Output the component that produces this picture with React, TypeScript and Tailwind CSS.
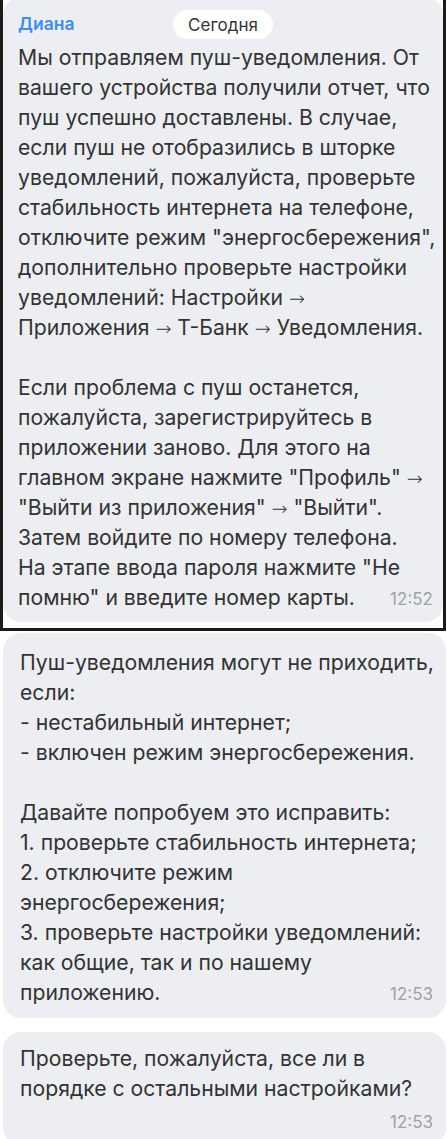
import React from "react";

const FONT = { fontFamily: "Inter, 'Noto Sans', 'Liberation Sans', sans-serif" };

function renderText(l: string) {
  const parts = l.split("→");
  return parts.map((p, i) => (
    <React.Fragment key={i}>
      {p}
      {i < parts.length - 1 && (
        <span style={{ fontFamily: "'DejaVu Sans', sans-serif" }} className="text-[19px] font-extralight">→</span>
      )}
    </React.Fragment>
  ));
}

function Lines({ lines }: { lines: string[] }) {
  return (
    <>
      {lines.map((l, i) => (
        <div key={i} className="whitespace-nowrap h-[30px]">
          {l === "" ? "\u00a0" : renderText(l)}
        </div>
      ))}
    </>
  );
}

function LastLine({ text, time }: { text: string; time: string }) {
  return (
    <div className="flex items-baseline justify-between h-[30px] whitespace-nowrap">
      <span>{text}</span>
      <span className="text-[17px] text-[#9ea2a9]">{time}</span>
    </div>
  );
}

export default function App() {
  const b1a = [
    "Мы отправляем пуш-уведомления. От",
    "вашего устройства получили отчет, что",
    "пуш успешно доставлены. В случае,",
    "если пуш не отобразились в шторке",
    "уведомлений, пожалуйста, проверьте",
    "стабильность интернета на телефоне,",
    "отключите режим \"энергосбережения\",",
    "дополнительно проверьте настройки",
    "уведомлений: Настройки →",
    "Приложения → Т-Банк → Уведомления.",
    "",
    "Если проблема с пуш останется,",
    "пожалуйста, зарегистрируйтесь в",
    "приложении заново. Для этого на",
    "главном экране нажмите \"Профиль\" →",
    "\"Выйти из приложения\" → \"Выйти\".",
    "Затем войдите по номеру телефона.",
    "На этапе ввода пароля нажмите \"Не",
  ];
  const b2 = [
    "Пуш-уведомления могут не приходить,",
    "если:",
    "- нестабильный интернет;",
    "- включен режим энергосбережения.",
    "",
    "Давайте попробуем это исправить:",
    "1. проверьте стабильность интернета;",
    "2. отключите режим",
    "энергосбережения;",
    "3. проверьте настройки уведомлений:",
    "как общие, так и по нашему",
  ];
  return (
    <div
      className="w-[447px] h-[1139px] bg-white overflow-hidden text-[21.2px] leading-[30px] text-[#333333]"
      style={FONT}
    >
      <div className="w-[446px] border-x-[3px] border-b-[3px] border-[#1b1b1b] pb-[6px] bg-white">
        <div className="relative -mt-[3px] bg-[#eceef2] rounded-[18px] pt-[15px] pl-[15px] pr-[10px] pb-[10px]">
          <div className="text-[17.5px] leading-[24px] font-semibold text-[#3e8cf7] mb-[6px]">Диана</div>
          <Lines lines={b1a} />
          <LastLine text={"помню\" и введите номер карты."} time="12:52" />
          <div className="absolute top-[13px] left-[170px] w-[100px] h-[29px] bg-white rounded-full flex items-center justify-center text-[17px] text-[#333333]">
            Сегодня
          </div>
        </div>
      </div>
      <div className="pl-[3px] pr-[1px] pt-[2px] flex flex-col gap-[14px]">
        <div className="bg-[#eceef2] rounded-[18px] pt-[14px] pl-[17px] pr-[13px] pb-[11px]">
          <Lines lines={b2} />
          <LastLine text="приложению." time="12:53" />
        </div>
        <div className="bg-[#eceef2] rounded-[18px] pt-[11px] pl-[17px] pr-[13px] pb-[8px]">
          <Lines lines={["Проверьте, пожалуйста, все ли в", "порядке с остальными настройками?"]} />
          <div className="flex justify-end h-[34px] text-[17px] text-[#9ea2a9] leading-[38px]">12:53</div>
        </div>
      </div>
    </div>
  );
}
